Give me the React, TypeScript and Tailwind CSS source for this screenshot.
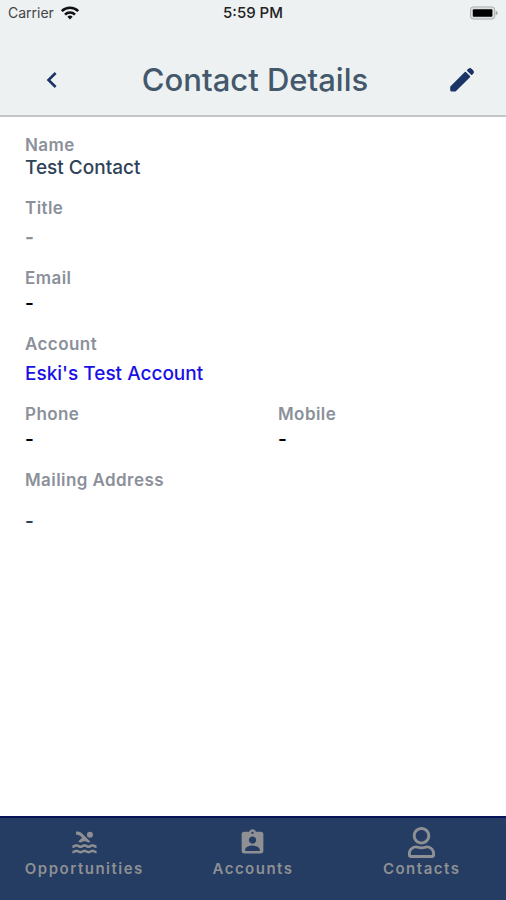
import React from 'react';
import clsx from 'clsx';
import { FaRegUser } from 'react-icons/fa';
import { MdAssignmentInd, MdChevronLeft, MdPool } from 'react-icons/md';

interface FieldProps {
    label: string;
    valueClass?: string;
    children: React.ReactNode;
}

function Field({ label, valueClass, children }: FieldProps) {
    return (
        <div>
            <dt className="text-[17px] leading-5 font-semibold tracking-wide text-[#8b909a]">{label}</dt>
            <dd className={clsx('text-[19px] leading-6', valueClass)}>{children}</dd>
        </div>
    );
}

function PencilIcon() {
    return (
        <svg width="24" height="24" viewBox="0 0 24 24" fill="currentColor">
            <path d="M.6 18.2 14.800 4a.8.8 0 0 1 1.100 0l4.100 4.100a.8.8 0 0 1 0 1.100L5.800 23.200a1.400 1.400 0 0 1-1 .4H1.800A1.600 1.600 0 0 1 .2 22v-2.800c0-.4.100-.7.4-1z" />
            <path d="M17.200 1.800 18.200.9a2.600 2.600 0 0 1 3.600 0l1.300 1.300a2.600 2.600 0 0 1 0 3.600l-.9 1a.8.8 0 0 1-1.100 0l-3.900-3.900a.8.8 0 0 1 0-1.100z" />
        </svg>
    );
}

function StatusBar() {
    return (
        <div className="grid grid-cols-3 items-center h-[26px] px-2 text-[#222]">
            <div className="flex items-center gap-1.5 text-sm text-[#444]">
                <span>Carrier</span>
                <svg width="20" height="14" viewBox="0 0 20 14" fill="none" stroke="#111" strokeWidth="2.6" aria-label="Wi-Fi">
                    <path d="M1.8 5.2a11.6 11.6 0 0 1 16.4 0" />
                    <path d="M5 8.6a7.1 7.1 0 0 1 10 0" />
                    <path d="M10 13.4 7.4 10.8a3.7 3.7 0 0 1 5.2 0z" fill="#111" stroke="none" />
                </svg>
            </div>
            <div className="text-center text-[15px] font-medium">5:59 PM</div>
            <svg className="justify-self-end" width="28" height="14" viewBox="0 0 30 14" aria-label="Battery">
                <rect x="0.5" y="0.5" width="26" height="13" rx="3" fill="#dcdfdf" stroke="#a9abab" />
                <rect x="3" y="3" width="21" height="8" rx="1" fill="#000" />
                <path d="M27.5 4.5v5c1.6-.6 2.2-1.4 2.2-2.5s-.6-1.9-2.2-2.5z" fill="#a9abab" />
            </svg>
        </div>
    );
}

const tabs = [
    { label: 'Opportunities', icon: <MdPool size={29} /> },
    { label: 'Accounts', icon: <MdAssignmentInd size={29} /> },
    { label: 'Contacts', icon: <FaRegUser size={31} /> },
];

export default function App() {
    return (
        <div className="flex flex-col min-h-screen bg-white font-['Inter',sans-serif]">
            <header className="bg-[#edf1f2] border-b-2 border-[#c3c6c8]">
                <StatusBar />
                <div className="grid grid-cols-[1fr_auto_1fr] items-center pl-9 pr-8 pt-[26px] pb-[7px]">
                    <button type="button" aria-label="Back" className="justify-self-start text-[#1b3468]">
                        <MdChevronLeft size={32} />
                    </button>
                    <h1 className="text-[31px] leading-[56px] font-medium text-[#44586c]">Contact Details</h1>
                    <button type="button" aria-label="Edit contact" className="justify-self-end text-[#1b3468]">
                        <PencilIcon />
                    </button>
                </div>
            </header>

            <main className="flex-1 px-[25px] pt-[18px]">
                <dl className="flex flex-col gap-[18px]">
                    <Field label="Name" valueClass="mt-px font-medium text-[#2f4358]">Test Contact</Field>
                    <Field label="Title" valueClass="mt-2 font-bold text-[#8b909a]">-</Field>
                    <Field label="Email" valueClass="mt-1 font-semibold text-black">-</Field>
                    <Field label="Account" valueClass="mt-2 font-medium">
                        <a href="#account" className="text-[#1a10e6]">Eski's Test Account</a>
                    </Field>
                    <div className="grid grid-cols-2 gap-x-[50px]">
                        <Field label="Phone" valueClass="mt-1 font-semibold text-black">-</Field>
                        <Field label="Mobile" valueClass="mt-1 font-semibold text-black">-</Field>
                    </div>
                    <Field label="Mailing Address" valueClass="mt-5 font-semibold text-[#2f4358]">-</Field>
                </dl>
            </main>

            <nav className="grid grid-cols-3 h-[84px] bg-[#253c63] border-t-2 border-[#08145a] text-[#8e9093]">
                {tabs.map((tab) => (
                    <a key={tab.label} href={`#${tab.label.toLowerCase()}`} className="flex flex-col items-center pt-2">
                        <span className="flex items-center h-8">{tab.icon}</span>
                        <span className="text-[15px] leading-[22px] font-semibold tracking-widest">{tab.label}</span>
                    </a>
                ))}
            </nav>
        </div>
    );
}
